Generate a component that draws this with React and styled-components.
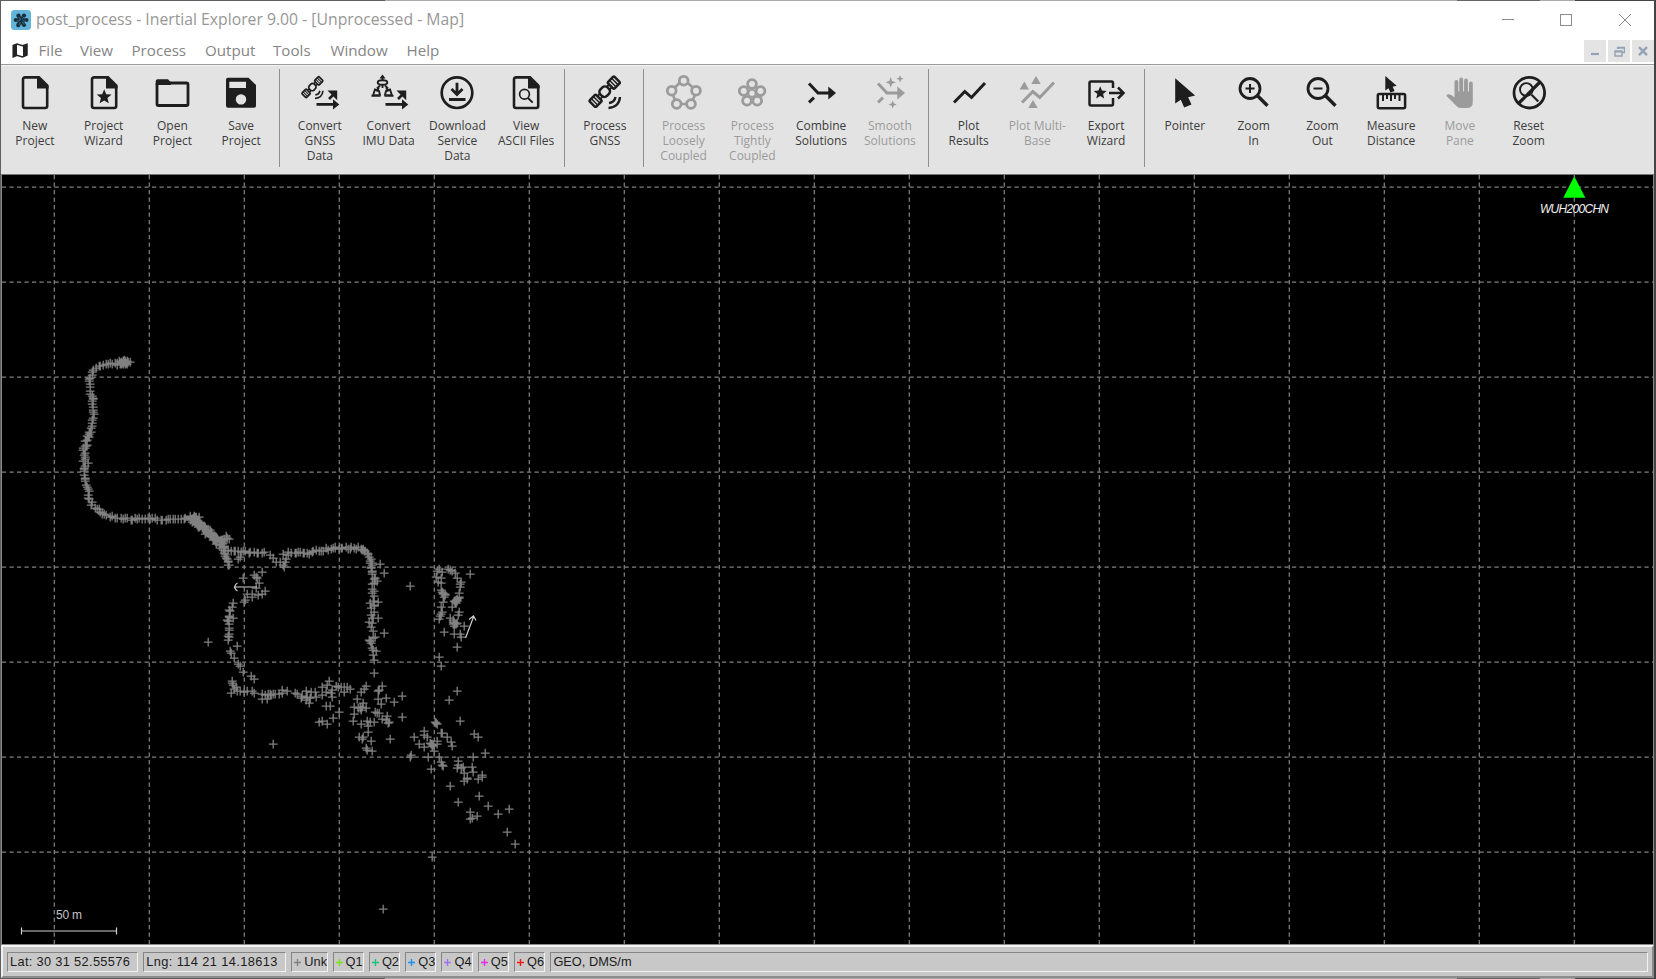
import React from 'react';
import styled, { createGlobalStyle } from 'styled-components';

const Global = createGlobalStyle`
  html, body { margin: 0; padding: 0; background: #5c5c5c; }
  * { box-sizing: border-box; }
  svg { display: block; }
`;

const Desktop = styled.div`
  width: 1656px;
  height: 979px;
  overflow: hidden;
  padding: 1px 2px 1px 1px;
  background: linear-gradient(90deg, #5f5f5f 0 385px, #aaa 385px 1457px, #666 1457px 1540px, #aaa 1540px 1575px, #444 1575px);
`;

const Window = styled.div`
  display: flex;
  flex-direction: column;
  width: 1653px;
  height: 977px;
  background: #fff;
  font-family: "Open Sans", "Noto Sans", sans-serif;
`;

const TitleBar = styled.header`
  display: flex;
  flex: none;
  align-items: center;
  height: 37px;
  padding-left: 10px;
`;

const Title = styled.h1`
  flex: 1;
  margin: 0 0 0 5px;
  font-size: 15.76px;
  font-weight: 400;
  line-height: 37px;
  color: #979797;
  white-space: pre;
`;

const Caption = styled.div`
  display: flex;
  gap: 46px;
  padding: 1px 23px 0 0;
  svg:last-child { margin-left: 1px; }
`;

const MenuBar = styled.nav`
  display: flex;
  flex: none;
  height: 26px;
  padding: 0 0 0 10.5px;
`;

const MenuIcon = styled.div`
  width: 27px;
  padding-top: 5px;
`;

const MenuItem = styled.span`
  width: ${(p) => p.$w}px;
  font-size: 15.15px;
  line-height: 25px;
  color: #858585;
`;

const MdiButtons = styled.div`
  display: flex;
  gap: 2px;
  margin-left: auto;
  padding: 2px 0 0 0;
`;

const MdiButton = styled.div`
  display: grid;
  place-items: center;
  width: 22px;
  height: 22px;
  background: #e4e4e4;
`;

const Toolbar = styled.div`
  display: flex;
  flex: none;
  height: 111px;
  border-top: 1px solid #9c9c9c;
  border-bottom: 1px solid #777;
  background: #e3e3e3;
  box-shadow: inset 0 1px 0 #f2f2f2;
`;

const Tool = styled.div`
  display: flex;
  flex: none;
  flex-direction: column;
  align-items: center;
  width: 68.75px;
  padding-top: 8px;
  color: ${(p) => (p.$off ? '#9b9b9b' : '#1e1e1e')};
  &:first-child { margin-left: -0.5px; }
`;

const ToolLabel = styled.div`
  margin-top: 5px;
  font-size: 12px;
  line-height: 15px;
  text-align: center;
  white-space: pre;
  color: ${(p) => (p.$off ? '#9b9b9b' : '#3c3c3c')};
`;

const Separator = styled.div`
  flex: none;
  width: 1px;
  height: 98px;
  margin: 4px 5.5px 0 3.5px;
  background: #909090;
`;

const MapPane = styled.main`
  flex: none;
  height: 770px;
  border: 1px solid #8a8a8a;
  border-top: 0;
  background: #000;
  svg { font-family: "Liberation Sans", Arial, sans-serif; }
`;

const StatusBar = styled.footer`
  display: flex;
  flex: none;
  height: 33px;
  gap: 5px;
  padding: 5px 4px 4px 4px;
  background: #c8c8c8;
  border-top: 2px solid #f4f4f4;
  border-left: 2px solid #f0f0f0;
  border-right: 2px solid #8c8c8c;
  border-bottom: 2px solid #8c8c8c;
`;

const Field = styled.div`
  display: flex;
  align-items: center;
  gap: 3px;
  width: ${(p) => (p.$w ? p.$w + 'px' : 'auto')};
  flex: ${(p) => (p.$w ? 'none' : 1)};
  height: 20px;
  padding-left: 2px;
  overflow: hidden;
  border: 1px solid;
  border-color: #858585 #f2f2f2 #f2f2f2 #858585;
  font: 12.8px/18px "Liberation Sans", Arial, sans-serif;
  letter-spacing: ${(p) => p.$ls || 0}px;
  color: #1c1c1c;
  white-space: pre;
`;

const star = (cx, cy, r, inner = 0.4, n = 5) =>
  Array.from({ length: n * 2 }, (_, i) => {
    const a = -Math.PI / 2 + (i * Math.PI) / n;
    const q = i % 2 ? r * inner : r;
    return `${(cx + q * Math.cos(a)).toFixed(2)},${(cy + q * Math.sin(a)).toFixed(2)}`;
  }).join(' ');

const Fill = ({ d, points }) =>
  points ? <polygon points={points} fill="currentColor" stroke="none" /> : <path d={d} fill="currentColor" stroke="none" />;

const Page = () => (
  <>
    <path d="M24 4.4H10a2 2 0 0 0-2 2V33a2 2 0 0 0 2 2h20.2a2 2 0 0 0 2-2V13" />
    <Fill d="M22 3h2.5L33.6 12v3.5H22z" />
  </>
);

const Satellite = () => (
  <>
    <g transform="translate(19.7 18.7) rotate(-45)" strokeWidth="2.5">
      <rect x="-17.5" y="-4.6" width="9.2" height="9.2" rx="1.5" />
      <path d="M-14.4-4v8M-11.4-4v8" strokeWidth="1.5" />
      <rect x="-5" y="-4.6" width="10" height="9.2" rx="3.6" />
      <path d="M-8-2h3M-8 2h3M5-2h3M5 2h3" strokeWidth="1.8" />
      <rect x="8.3" y="-4.6" width="9.2" height="9.2" rx="1.5" />
      <path d="M11.4-4v8M14.4-4v8" strokeWidth="1.5" />
    </g>
    <path d="M24 30q5.5-.5 6.5-6M23.5 35q10.500-.6 11.5-11" strokeWidth="2.4" />
  </>
);

const ConvertArrows = () => (
  <>
    <path d="M16.500 31.400H34M29 26l5-5" />
    <Fill d="M33 26.200l6.300 5.200-6.300 5.200zM27.500 17.500h9.700v9.700z" />
  </>
);

const Cursor = () => <Fill d="M10.200 5.300V30.500l5.600-3.700 3.400 7.600 7.300-2.800-3.400-7.400 7-1.700z" />;

const Merge = () => (
  <>
    <path d="M8 10.500l9 9.500h12M8 29.300l5-4.600" strokeWidth="3" />
    <Fill d="M27.300 13.500l7.700 6.500-7.700 6.500z" />
  </>
);

const Lens = ({ plus }) => (
  <>
    <circle cx="16" cy="15.500" r="10" strokeWidth="2.800" />
    <path d="M23.500 22.800l10 10" strokeWidth="3.400" />
    <path d={plus ? 'M11.500 15.500h9M16 11v9' : 'M11.500 15.500h9'} strokeWidth="2" />
  </>
);

const ring = (pts, r) => pts.map(([x, y]) => <circle key={`${x},${y}`} cx={x} cy={y} r={r} strokeWidth="2.800" />);

const icons = {
  page: <Page />,
  wizard: <><Page /><Fill points={star(20.200, 24, 7.800, 0.44)} /></>,
  folder: <><rect x="5" y="10" width="31" height="22.500" rx="1.500" strokeWidth="2.800" /><Fill d="M3.700 12V8a2 2 0 0 1 2-1.700H16l3 3.200V12z" /></>,
  save: <path fillRule="evenodd" fill="currentColor" stroke="none" d="M7 4.700H27.500L35 12V32.700a2 2 0 0 1-2 2H7a2 2 0 0 1-2-2V6.700a2 2 0 0 1 2-2zM8.300 8.700v6.200H25V8.700zM20 21.200a5.200 5.200 0 1 0 .01 0z" />,
  convertGnss: <><g transform="translate(-1.200 1.200) scale(.69)"><Satellite /></g><ConvertArrows /></>,
  convertImu: (
    <>
      <g strokeWidth="1.900">
        <ellipse cx="13.500" cy="9.500" rx="4.800" ry="2.200" />
        <path d="M13.500 3v5M13.500 12v3M11 12.500l-3 3M16 12.500l3 3M4 22.500l2-6 4 1.500 1 4zM23 22.500l-2-6-4 1.500-1 4zM7 18l3-3M20 18l-3-3M2.500 22.800h9M15.500 22.800h9" />
      </g>
      <Fill d="M10.500 5.500l3-4 3 4z" />
      <ConvertArrows />
    </>
  ),
  download: <><circle cx="20" cy="19.700" r="15.300" strokeWidth="2.700" /><path d="M20 9.700V20M14.500 16l5.500 5.500 5.500-5.500M12 26.500h16.500" strokeWidth="2.800" /></>,
  ascii: <><Page /><circle cx="18.500" cy="21.300" r="4.900" strokeWidth="1.700" /><path d="M22 25l4.700 4.700" strokeWidth="1.900" /></>,
  gnss: <Satellite />,
  loose: <><path d="M15.800 9.800l-4.700 4.500M23.500 9.800l5 4.500M9 22l2 5M31 22l-2.300 5M17.500 31h5" />{ring([[19.700, 7.700], [7.700, 17.700], [32, 17.700], [12.700, 31], [27, 31]], 4.400)}</>,
  tight: <>{ring([[20, 11], [11.700, 18], [28.500, 18], [15, 27.700], [25.200, 27.700]], 4.400)}<circle cx="20" cy="20.200" r="3.500" strokeWidth="1.800" /></>,
  combine: <Merge />,
  smooth: <><Merge /><Fill points={star(20.700, 9.300, 5.200, 0.38, 4)} /><Fill points={star(30, 5.700, 3.700, 0.4, 4)} /><Fill points={star(22.700, 31.500, 4, 0.4, 4)} /></>,
  plot: <path d="M5 29.500l10.800-11 6.700 6L36 10" strokeWidth="3" />,
  multi: <><path d="M5 29.500l10.800-11 7 6L37 9.500" strokeWidth="3" /><Fill d="M7.300 8.500l4.700 8H2.600zM19 3l4.700 8h-9.400zM16 27l4.700 8h-9.400z" /></>,
  exporter: <><path d="M27 15V10a1.500 1.500 0 0 0-1.500-1.500H5A1.500 1.500 0 0 0 3.500 10v21a1.500 1.500 0 0 0 1.500 1.500h20.500A1.500 1.500 0 0 0 27 31v-6" strokeWidth="2.500" /><Fill points={star(14.200, 20, 6.800, 0.44)} /><path d="M23 20h14M32 14.500l5.500 5.500-5.500 5.500" strokeWidth="2.500" /></>,
  pointer: <Cursor />,
  zoomIn: <Lens plus />,
  zoomOut: <Lens />,
  measure: <><g transform="translate(8.500 0) scale(.57)"><Cursor /></g><rect x="6.800" y="21" width="27.300" height="14.300" rx="1.500" strokeWidth="2.500" /><path d="M12 21v7M16 21v5M20 21v7M24 21v5M28.500 21v7" strokeWidth="2" /></>,
  hand: <Fill d="M14.500 22V9a1.900 1.900 0 0 1 3.800 0v9.500h1V6.500a1.900 1.900 0 0 1 3.800 0v12h1V7.500a1.900 1.900 0 0 1 3.800 0v11h1.100v-8a1.900 1.900 0 0 1 3.800 0V29q0 6-6 6H21q-3 0-5-2.500l-9-9q-1.300-2 1.200-2.300 2.300-.2 6.300 3.300z" />,
  reset: <><circle cx="20.300" cy="19.700" r="15.300" strokeWidth="2.800" /><circle cx="17.400" cy="16.500" r="6.400" strokeWidth="1.900" /><path d="M22.500 21.700l6.800 6.800" strokeWidth="2.200" /><path d="M9.500 30.500L31 9" strokeWidth="3.200" /></>,
};

const groups = [
  [['page', 'New\nProject'], ['wizard', 'Project\nWizard'], ['folder', 'Open\nProject'], ['save', 'Save\nProject']],
  [['convertGnss', 'Convert\nGNSS\nData'], ['convertImu', 'Convert\nIMU Data'], ['download', 'Download\nService\nData'], ['ascii', 'View\nASCII Files']],
  [['gnss', 'Process\nGNSS']],
  [['loose', 'Process\nLoosely\nCoupled', 1], ['tight', 'Process\nTightly\nCoupled', 1], ['combine', 'Combine\nSolutions'], ['smooth', 'Smooth\nSolutions', 1]],
  [['plot', 'Plot\nResults'], ['multi', 'Plot Multi-\nBase', 1], ['exporter', 'Export\nWizard']],
  [['pointer', 'Pointer'], ['zoomIn', 'Zoom\nIn'], ['zoomOut', 'Zoom\nOut'], ['measure', 'Measure\nDistance'], ['hand', 'Move\nPane', 1], ['reset', 'Reset\nZoom']],
];

const menus = [['File', 41.5], ['View', 51.5], ['Process', 73.500], ['Output', 68], ['Tools', 57.5], ['Window', 76], ['Help', 50]];

// Densely sampled stretches of the track: [spacing, jitter, x, y, x, y, ...]
const tracks = [
  [0.3, 2.8, 120, 362.5, 127, 362],
  [2.6, 1, 130, 363, 105, 364, 98, 366, 93, 370, 91, 377, 89, 385, 91, 393, 93, 402, 93, 420, 91, 430],
  [1.5, 1.7, 91, 430, 88, 438, 84, 446, 84, 450],
  [2.5, 1.5, 84, 450, 84, 462, 83, 470, 84, 477, 86, 485, 88, 492, 90, 500, 94, 507, 99, 512, 107, 516],
  [2.5, 1, 107, 516, 118, 518, 130, 519, 150, 519, 170, 519, 188, 518],
  [0.4, 2.6, 190, 518, 197, 519],
  [0.6, 2.5, 193, 520, 200, 526, 210, 534, 218, 541, 223, 547],
  [1.6, 1.4, 223, 547, 225, 558, 230, 567],
  [2.8, 1.3, 225, 549, 238, 551, 248, 552, 267, 553],
  [2.3, 1.4, 289, 553, 310, 553, 325, 549, 345, 548, 360, 548],
  [1.6, 1.4, 360, 548, 366, 553, 371, 559, 372, 572],
  [2.4, 2, 372, 572, 375, 580, 373, 592, 372, 602, 372, 612, 371, 622, 373, 635, 370, 643],
  [4, 2, 370, 643, 375, 653, 372, 664],
  [2.6, 1.4, 231, 607, 229, 615, 228, 630, 229, 644],
  [0.8, 1.6, 443, 592, 445, 595],
  [0.8, 1.6, 455, 602, 458, 598],
  [0.8, 1.4, 453, 621, 456, 625],
  [0.7, 1.3, 430, 743, 433, 745],
];

const marks = [
  [227, 538, 226, 536, 229, 539, 224, 539, 270, 555, 273, 558, 276, 562, 280, 562, 284, 567, 283, 565, 285, 562, 286, 559, 283, 554, 288, 555, 384, 573, 384, 633, 380, 564, 378, 602, 378, 618, 374, 673, 410, 586, 88, 463],
  [238, 559, 240, 557, 243, 578, 254, 575, 262, 572, 257, 578, 256, 577, 259, 583, 265, 591, 256, 588, 262, 594, 252, 597, 247, 594, 252, 594, 258, 595, 244, 602, 245, 600, 233, 603, 233, 618, 237, 646, 231, 653, 230, 651, 234, 658, 238, 664, 240, 666, 243, 672, 251, 676, 254, 679, 208, 642],
  [232, 681, 232, 683, 233, 685, 236, 687, 234, 689, 231, 693, 237, 691, 240, 691, 244, 692, 247, 691, 252, 691, 254, 693, 262, 699, 262, 694, 265, 695, 267, 699, 268, 694, 270, 694, 271, 695, 273, 694, 275, 694, 279, 694, 282, 693, 282, 690, 287, 691, 295, 693, 297, 694, 301, 698, 302, 696, 306, 691, 307, 697, 306, 700, 309, 703, 310, 698, 311, 692, 315, 692, 316, 697, 322, 687, 322, 695, 326, 692, 327, 685, 329, 681, 331, 693, 332, 697, 332, 690, 336, 686, 338, 687, 341, 687, 344, 687, 347, 687, 344, 692, 350, 689, 326, 706, 330, 706, 339, 712, 333, 718, 319, 722, 322, 721, 327, 724, 273, 744],
  [366, 686, 361, 692, 364, 689, 382, 686, 378, 691, 379, 690, 378, 699, 386, 698, 381, 704, 394, 702, 402, 696, 357, 699, 363, 703, 354, 707, 358, 708, 360, 708, 362, 707, 366, 708, 354, 714, 361, 710, 375, 712, 377, 713, 379, 713, 402, 717, 382, 719, 387, 716, 386, 720, 388, 723, 389, 722, 353, 721, 361, 724, 367, 721, 370, 722, 374, 722, 368, 726, 368, 732, 359, 737, 362, 739, 363, 737, 371, 741, 366, 748, 367, 750, 372, 751, 390, 739],
  [424, 731, 424, 735, 414, 737, 427, 737, 419, 744, 424, 747, 430, 743, 432, 744, 432, 746, 437, 741, 437, 744, 434, 751, 411, 755, 410, 757, 428, 757, 431, 769, 436, 723, 437, 724, 435, 722, 441, 733, 442, 733, 447, 737, 451, 742, 452, 746, 439, 757, 441, 762, 442, 765, 443, 766, 458, 761, 457, 768, 458, 765, 461, 768, 463, 767, 464, 773, 464, 781, 467, 778, 467, 779, 472, 767, 473, 772, 473, 757, 478, 779, 482, 775, 482, 777, 485, 753, 474, 734, 478, 737, 460, 721, 450, 786, 458, 802, 479, 796, 488, 806, 498, 814, 509, 809, 507, 832, 515, 844, 470, 812, 477, 816, 470, 819, 472, 818, 432, 857, 383, 909],
  [470, 574, 464, 626, 444, 632, 457, 647, 439, 657, 441, 666, 457, 691, 449, 700, 454, 634, 460, 634, 461, 637, 450, 618, 437, 571, 439, 569, 436, 577, 438, 582, 442, 572, 441, 578, 441, 583, 441, 590, 443, 593, 445, 594, 444, 597, 443, 602, 441, 607, 442, 612, 440, 616, 441, 614, 439, 619, 448, 569, 450, 570, 452, 571, 455, 573, 457, 578, 461, 582, 460, 584, 460, 587, 459, 593, 459, 597, 457, 599, 455, 602, 456, 601, 452, 607, 459, 612, 458, 615, 454, 622, 455, 624, 453, 620, 454, 626],
];

const crossPath = (() => {
  let seed = 7;
  const rand = () => {
    seed = (seed * 16807) % 2147483647;
    return seed / 2147483647 - 0.5;
  };
  const pts = [];
  tracks.forEach(([step, jitter, ...c]) => {
    for (let i = 0; i + 3 < c.length; i += 2) {
      const dx = c[i + 2] - c[i];
      const dy = c[i + 3] - c[i + 1];
      const n = Math.max(1, Math.round(Math.hypot(dx, dy) / step));
      for (let k = 0; k < n; k += 1) {
        pts.push([c[i] + (dx * k) / n + rand() * jitter * 2, c[i + 1] + (dy * k) / n + rand() * jitter * 2]);
      }
    }
  });
  marks.forEach((m) => {
    for (let i = 0; i < m.length; i += 2) pts.push([m[i], m[i + 1]]);
  });
  return pts.map(([x, y]) => `M${Math.round(x) - 4.2} ${Math.round(y) + 0.2}h8.8M${Math.round(x) + 0.2} ${Math.round(y) - 4.2}v8.8`).join('');
})();

const columns = Array.from({ length: 17 }, (_, i) => 54.3 + i * 95);
const rows = Array.from({ length: 8 }, (_, i) => 187.2 + i * 95);

const TrackMap = () => (
  <svg width="1651" height="769" viewBox="2 175 1651 769">
    <g stroke="#808080" strokeWidth="1.25" strokeDasharray="4.2 3.3">
      {columns.map((x) => <line key={x} x1={x} x2={x} y1="175" y2="944" />)}
      {rows.map((y) => <line key={y} x1="2" x2="1653" y1={y} y2={y} />)}
    </g>
    <path d={crossPath} stroke="#808080" strokeWidth="1.3" fill="none" />
    <g stroke="#d0d0d0" strokeWidth="1.200" fill="none">
      <path d="M235 587h22M237.500 583q-2 1-3 4 1 3 3 4" />
      <path d="M465.500 638l8-21M469 619.500l4.500-3.500 2.500 4.500" />
      <path d="M21.500 931h95M21.500 927.500v7M116.500 927.500v7" />
    </g>
    <text x="56" y="919" fontSize="12" textLength="26" fill="#c4c4c4">50 m</text>
    <path d="M1574.300 176.200l11 21.500h-22z" fill="#0f0" />
    <text x="1540" y="212.600" fontSize="12" fontStyle="italic" textLength="69" fill="#f0f0f0">WUH200CHN</text>
  </svg>
);

const Plus = ({ color }) => (
  <svg width="7" height="7" viewBox="0 0 7 7" style={{ flex: 'none' }}>
    <path d="M3.500 0v7M0 3.500h7" stroke={color} strokeWidth="1.400" />
  </svg>
);

const qualities = [['Unk', '#808080', 36.3], ['Q1', '#7be01a', 31.3], ['Q2', '#18c080', 31.3], ['Q3', '#1890f0', 31.3], ['Q4', '#a070f0', 31.3], ['Q5', '#e828e8', 31.3], ['Q6', '#f01818', 31.3]];

export default function App() {
  return (
    <Desktop>
      <Global />
      <Window>
        <TitleBar>
          <svg width="20" height="20" viewBox="0 0 20 20">
            <rect width="20" height="20" rx="3.500" fill="#62b4da" />
            <g fill="#17303d">
              <circle cx="10" cy="10.500" r="4.200" />
              <circle cx="7.500" cy="5.800" r="2.200" />
              <circle cx="13" cy="5.600" r="2.100" />
              <circle cx="4.700" cy="10" r="2" />
              <circle cx="15.500" cy="10" r="2" />
              <circle cx="7.300" cy="15" r="2.200" />
              <circle cx="13" cy="15" r="2.100" />
            </g>
            <path d="M8 7l1.500 3M13 7l-2 2.500M6 11l3-.5M15 11l-3.500 0M8 15l1.500-3M13 14.500l-1.500-2.500" stroke="#3f87a6" strokeWidth=".7" />
          </svg>
          <Title>post_process - Inertial Explorer 9.00 - [Unprocessed - Map]</Title>
          <Caption>
            <svg width="12" height="12"><path d="M0 5.500h12" stroke="#8c8c8c" /></svg>
            <svg width="12" height="12"><rect x=".5" y=".5" width="11" height="11" fill="none" stroke="#8c8c8c" /></svg>
            <svg width="12" height="12"><path d="M0 0l12 12M12 0L0 12" stroke="#8c8c8c" /></svg>
          </Caption>
        </TitleBar>
        <MenuBar>
          <MenuIcon>
            <svg width="16" height="15" viewBox="0 0 16 15">
              <path d="M1.200 2.500L5 1l5.500 1.800L15 1.200V12l-4.500 2L5 12.200 1.200 13.800z" fill="#fff" stroke="#222" strokeWidth="1.500" />
              <path d="M1 2.500L5 1v11.500L1 14zM11 3l4-1.800V12.500L11 14z" fill="#222" />
            </svg>
          </MenuIcon>
          {menus.map(([name, w]) => <MenuItem key={name} $w={w}>{name}</MenuItem>)}
          <MdiButtons>
            <MdiButton><svg width="10" height="10"><path d="M1 8h8" stroke="#93a2b4" strokeWidth="2.200" /></svg></MdiButton>
            <MdiButton><svg width="11" height="11" fill="none" stroke="#93a2b4" strokeWidth="1.400"><path d="M3.500 3V1.500h7v5H8.500M3.500 2h7M1 5h7v5H1zM1 5.700h7" /></svg></MdiButton>
            <MdiButton><svg width="10" height="10"><path d="M1 1.200l8 8M9 1.200l-8 8" stroke="#93a2b4" strokeWidth="2.400" /></svg></MdiButton>
          </MdiButtons>
        </MenuBar>
        <Toolbar>
          {groups.map((g, i) => (
            <React.Fragment key={i}>
              {i > 0 && <Separator />}
              {g.map(([icon, label, off]) => (
                <Tool key={label} $off={off}>
                  <svg width="40" height="40" viewBox="0 0 40 40" fill="none" stroke="currentColor" strokeWidth="2.600">{icons[icon]}</svg>
                  <ToolLabel $off={off}>{label}</ToolLabel>
                </Tool>
              ))}
            </React.Fragment>
          ))}
        </Toolbar>
        <MapPane><TrackMap /></MapPane>
        <StatusBar>
          <Field $w={131.3} $ls={0.33}>Lat: 30 31 52.55576</Field>
          <Field $w={143} $ls={0.4}>Lng: 114 21 14.18613</Field>
          {qualities.map(([name, color, w]) => <Field key={name} $w={w}><Plus color={color} />{name}</Field>)}
          <Field>GEO, DMS/m</Field>
        </StatusBar>
      </Window>
    </Desktop>
  );
}
